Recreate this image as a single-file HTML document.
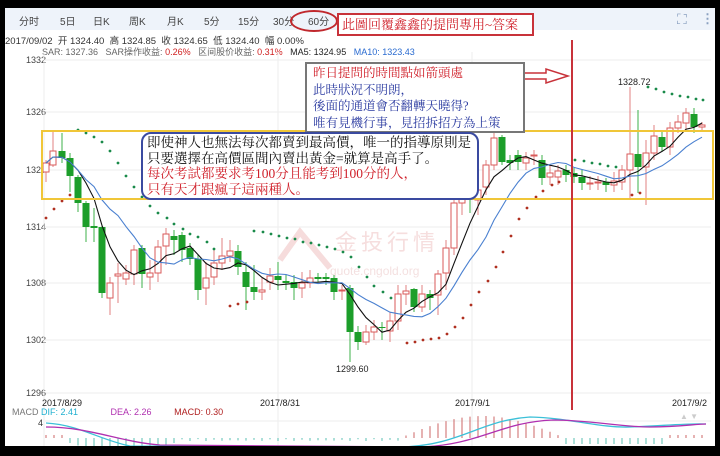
<!DOCTYPE html>
<html><head><meta charset="utf-8">
<style>
body{margin:0;width:720px;height:456px;background:#000;overflow:hidden;font-family:"Liberation Sans","Noto Sans CJK SC",sans-serif;}
#page{position:absolute;left:5px;top:8px;width:710px;height:438px;background:#fff;overflow:hidden;}
.tb{position:absolute;left:0;top:0;width:710px;height:22px;background:#eef3fa;}
.tab{position:absolute;top:5px;font-size:10px;color:#444;}
.abs{position:absolute;white-space:nowrap;}
.serif{font-family:"Liberation Serif","Noto Serif CJK SC",serif;}
</style></head><body>
<div id="page">
<div class="tb"></div>
<span class="tab" style="left:14px">分时</span>
<span class="tab" style="left:55px">5日</span>
<span class="tab" style="left:88px">日K</span>
<span class="tab" style="left:124px">周K</span>
<span class="tab" style="left:162px">月K</span>
<span class="tab" style="left:199px">5分</span>
<span class="tab" style="left:233px">15分</span>
<span class="tab" style="left:268px">30分</span>
<span class="tab" style="left:303px">60分</span>
<div class="abs" style="left:285px;top:2px;width:44px;height:18px;border:2px solid #c0282d;border-radius:50%;"></div>
<div class="abs" style="left:332px;top:5px;width:190px;height:19px;border:2px solid #c8323a;background:#fff;color:#d0202a;font-size:13px;line-height:19px;padding-left:3px;box-sizing:content-box" class="serif"><span class="serif">此圖回覆鑫鑫的提問專用~答案</span></div>
<div class="abs" style="left:672px;top:3px;font-size:14px;color:#8aa0c0">⛶</div>
<div class="abs" style="left:696px;top:3px;font-size:13px;color:#8aa0c0;font-weight:bold">⋮</div>
<div class="abs" style="left:0;top:25px;font-size:9.5px;color:#333">2017/09/02 &nbsp;开 1324.40 &nbsp;高 1324.85 &nbsp;收 1324.65 &nbsp;低 1324.40 &nbsp;幅 0.00%</div>
<div class="abs" style="left:37px;top:37px;font-size:9px;color:#666">SAR: 1327.36 &nbsp; SAR操作收益: <span style="color:#d02020">0.26%</span> &nbsp; 区间股价收益: <span style="color:#d02020">0.31%</span> &nbsp; <span style="color:#222">MA5: 1324.95</span> &nbsp; <span style="color:#2a6bd0">MA10: 1323.43</span></div>
<svg id="ch" width="710" height="438" style="position:absolute;left:0;top:0"></svg>
<div class="abs" style="left:300px;top:54px;width:210px;height:66px;border:2px solid #777;background:#fff;font-size:12.5px;line-height:16.5px;padding:1px 0 0 6px" ><div class="serif" style="color:#d0202a">昨日提問的時間點如箭頭處</div><div class="serif" style="color:#2a3aa0">此時狀況不明朗，</div><div class="serif" style="color:#2a3aa0">後面的通道會否翻轉天曉得?</div><div class="serif" style="color:#2a3aa0">唯有見機行事，見招拆招方為上策</div></div>
<div class="abs" style="left:136px;top:124px;width:330px;height:63px;border:2px solid #3a4aa0;border-radius:10px;background:#fff;font-size:13.5px;line-height:15.5px;padding:1px 0 0 4px"><div class="serif" style="color:#111">即使神人也無法每次都賣到最高價，唯一的指導原則是</div><div class="serif" style="color:#111">只要選擇在高價區間內賣出黃金=就算是高手了。</div><div class="serif" style="color:#d0202a">每次考試都要求考100分且能考到100分的人，</div><div class="serif" style="color:#d0202a">只有天才跟瘋子這兩種人。</div></div>
<div class="abs" style="left:7px;top:399px;font-size:9px;color:#777">MACD <span style="color:#20b0d0">DIF: 2.41</span> &nbsp; &nbsp; &nbsp; &nbsp; &nbsp; &nbsp; <span style="color:#b030b0">DEA: 2.26</span> &nbsp; &nbsp; &nbsp; &nbsp; <span style="color:#b02020">MACD: 0.30</span></div>
</div>
<script>
var s='',C=[
[46,163,172,160,182,'r'],[53,151,165,132,167,'r'],[62,151,158,133,163,'g'],[70,158,176,153,192,'g'],[78,177,203,175,212,'g'],[86,203,227,201,242,'g'],[94,226,228,208,242,'g'],[102,227,293,225,298,'g'],[110,283,298,277,315,'r'],[118,274,276,263,303,'r'],[126,273,279,265,285,'r'],[134,250,274,245,285,'r'],[142,248,274,245,288,'g'],[150,273,277,260,290,'r'],[158,247,273,240,282,'r'],[166,234,246,228,265,'r'],[174,236,240,230,255,'g'],[182,235,250,232,262,'g'],[190,248,259,243,265,'g'],[198,259,290,255,300,'g'],[206,278,288,262,305,'r'],[214,263,277,250,285,'r'],[222,256,263,238,270,'r'],[230,251,256,240,262,'r'],[238,251,267,245,275,'g'],[246,272,287,262,310,'g'],[254,287,292,265,300,'g'],[262,290,292,278,300,'r'],[270,276,282,268,290,'r'],[278,276,280,262,290,'g'],[286,281,283,275,290,'g'],[294,282,288,275,300,'g'],[302,283,288,272,298,'r'],[310,278,283,270,288,'r'],[318,277,279,273,282,'g'],[326,277,279,273,285,'g'],[334,278,292,275,300,'g'],[342,290,291,285,300,'r'],[350,288,332,285,362,'g'],[358,332,342,326,350,'g'],[366,332,342,325,345,'r'],[374,327,332,320,340,'r'],[382,327,328,322,340,'g'],[390,321,331,312,342,'r'],[398,294,321,285,330,'r'],[406,291,294,285,305,'r'],[414,289,307,288,312,'g'],[422,294,307,285,312,'r'],[430,294,298,290,310,'g'],[438,274,295,270,315,'r'],[446,248,273,240,290,'r'],[454,203,248,195,255,'r'],[462,193,203,187,215,'r'],[470,193,198,185,213,'g'],[478,190,200,185,215,'r'],[486,165,187,160,195,'r'],[494,138,165,133,170,'r'],[502,137,162,135,165,'g'],[510,160,163,155,170,'g'],[518,155,162,150,170,'g'],[526,158,163,152,170,'r'],[534,155,156,150,165,'r'],[542,160,178,155,185,'g'],[550,173,177,165,185,'r'],[558,171,177,165,185,'r'],[566,170,175,165,182,'g'],[574,173,177,168,183,'g'],[582,177,183,170,190,'g'],[590,183,184,176,190,'r'],[598,182,183,176,190,'r'],[606,182,185,178,192,'g'],[614,181,185,172,192,'r'],[622,170,182,165,190,'r'],[630,154,170,87,200,'r'],[638,154,167,110,193,'g'],[646,153,167,140,205,'r'],[654,136,153,125,160,'r'],[662,137,147,130,152,'g'],[670,128,147,122,155,'r'],[678,122,128,115,133,'r'],[686,113,123,108,130,'r'],[694,114,127,108,133,'g'],[702,125,127,122,130,'r']];
var oy=8,ox=5;function X(x){return x-ox}function Y(y){return y-oy}
// grid
[60,112,170,227,283,340,393].forEach(function(y,i){s+='<line x1="40" x2="706" y1="'+Y(y)+'" y2="'+Y(y)+'" stroke="#eee"/>';s+='<text x="'+X(26)+'" y="'+(Y(y)+3)+'" font-size="9" fill="#444" font-family="Liberation Sans">'+(1332-6*i)+'</text>';});
[278,472].forEach(function(x){s+='<line x1="'+X(x)+'" x2="'+X(x)+'" y1="'+Y(52)+'" y2="'+Y(446)+'" stroke="#eee"/>'});
s+='<line x1="'+X(44)+'" x2="'+X(44)+'" y1="'+Y(52)+'" y2="'+Y(446)+'" stroke="#eee"/>';
// watermark
s+='<text x="'+X(335)+'" y="'+Y(250)+'" font-size="22" fill="#f6dede" font-family="Noto Sans CJK SC" letter-spacing="4">金投行情</text>';
s+='<text x="'+X(330)+'" y="'+Y(275)+'" font-size="12" fill="#f4e0e0" font-family="Liberation Sans">quote.cngold.org</text>';
s+='<path d="M'+X(280)+' '+Y(260)+' L'+X(300)+' '+Y(232)+' L'+X(330)+' '+Y(268)+'" fill="none" stroke="#f6dcdc" stroke-width="6"/>';
// candles
var cl=[];
C.forEach(function(c){var col=c[5]=='r'?'#d85a5a':'#1c9e2a';var x=X(c[0]);
s+='<line x1="'+x+'" x2="'+x+'" y1="'+Y(c[3])+'" y2="'+Y(c[4])+'" stroke="'+(c[5]=='r'?'#e08080':'#3cb04a')+'"/>';
var h=Math.max(1,c[2]-c[1]);
if(c[5]=='r')s+='<rect x="'+(x-3)+'" y="'+Y(c[1])+'" width="6" height="'+h+'" fill="#fff" stroke="'+col+'"/>';
else s+='<rect x="'+(x-3.5)+'" y="'+Y(c[1])+'" width="7" height="'+h+'" fill="'+col+'"/>';
cl.push(c[5]=='r'?c[1]:c[2]);});
function ma(n,col){var p='';for(var i=0;i<cl.length;i++){var a=0,k=0;for(var j=Math.max(0,i-n+1);j<=i;j++){a+=cl[j];k++;}p+=(i?'L':'M')+X(C[i][0])+' '+Y(a/k)+' ';}s+='<path d="'+p+'" fill="none" stroke="'+col+'" stroke-width="1.1"/>';}
ma(5,'#111');ma(10,'#4a80d0');
// SAR
var G=[[78,130],[86,133],[94,137],[102,142],[110,151],[118,163],[126,176],[134,187],[142,197],[150,206],[158,213],[167,218],[174,224],[183,229],[190,234],[198,237],[207,242],[214,249],[254,231],[263,232],[271,234],[279,236],[287,238],[295,239],[303,242],[311,243],[319,245],[327,247],[335,249],[343,252],[351,257],[359,267],[367,277],[374,286],[383,292],[391,298],[575,160],[584,161],[592,163],[600,164],[608,166],[616,167],[648,87],[656,89],[664,92],[672,94],[680,96],[688,97],[696,99],[703,100]];
var R=[[46,218],[54,209],[62,201],[70,195],[230,306],[238,304],[247,302],[407,343],[415,342],[423,340],[431,339],[439,338],[447,334],[455,327],[463,318],[471,305],[479,292],[488,281],[496,267],[503,252],[511,236],[519,219],[527,208],[536,197],[543,191],[552,185],[559,182],[632,195],[640,193]];
G.forEach(function(p){s+='<circle cx="'+X(p[0])+'" cy="'+Y(p[1])+'" r="1.4" fill="#1a8a4a"/>'});
R.forEach(function(p){s+='<circle cx="'+X(p[0])+'" cy="'+Y(p[1])+'" r="1.4" fill="#b03020"/>'});
s+='<text x="'+X(618)+'" y="'+Y(85)+'" font-size="9" fill="#222">1328.72</text>';
s+='<text x="'+X(336)+'" y="'+Y(372)+'" font-size="9" fill="#222">1299.60</text>';
// yellow box
s+='<rect x="'+X(42)+'" y="'+Y(131)+'" width="671" height="68" fill="none" stroke="#f0c638" stroke-width="2"/>';
// red vline, arrow
s+='<line x1="'+X(572)+'" x2="'+X(572)+'" y1="'+Y(40)+'" y2="'+Y(410)+'" stroke="#c8323a" stroke-width="2"/>';
s+='<path d="M'+X(519)+' '+Y(73)+' L'+X(546)+' '+Y(73)+' L'+X(546)+' '+Y(69)+' L'+X(568)+' '+Y(76)+' L'+X(546)+' '+Y(83)+' L'+X(546)+' '+Y(79)+' L'+X(519)+' '+Y(79)+' Z" fill="#fff" stroke="#c8323a" stroke-width="1.5"/>';
// dates
[['2017/8/29',42],['2017/8/31',260],['2017/9/1',455],['2017/9/2',672]].forEach(function(d){s+='<text x="'+X(d[1])+'" y="'+Y(406)+'" font-size="9" fill="#222">'+d[0]+'</text>'});
s+='<text x="'+X(680)+'" y="'+Y(419)+'" font-size="8" fill="#ccc">▲ ▼</text>';
// MACD
s+='<text x="'+X(38)+'" y="'+Y(426)+'" font-size="9" fill="#333">4</text>';
s+='<line x1="40" x2="706" y1="'+Y(421)+'" y2="'+Y(421)+'" stroke="#eee"/>';
for(var x=46;x<=708;x+=8){var v=0;
if(x<64)v=-3;else if(x<180)v=3+12*Math.sin((x-64)/116*Math.PI);else if(x<400)v=Math.abs(Math.sin(x))*2+1;else if(x<565)v=-22*Math.sin((x-400)/165*Math.PI);else if(x<670)v=6;else v=-3;
var col=v<0?'#c04040':'#30b0a0';s+='<line x1="'+X(x)+'" x2="'+X(x)+'" y1="'+Y(438)+'" y2="'+Y(438+v)+'" stroke="'+col+'" stroke-width="0.8"/>';}
s+='<path d="M'+X(46)+' '+Y(423)+' C'+X(80)+' '+Y(425)+' '+X(100)+' '+Y(440)+' '+X(130)+' '+Y(446)+' L'+X(400)+' '+Y(447)+' C'+X(460)+' '+Y(446)+' '+X(480)+' '+Y(420)+' '+X(530)+' '+Y(417)+' C'+X(570)+' '+Y(418)+' '+X(600)+' '+Y(428)+' '+X(630)+' '+Y(427)+' C'+X(660)+' '+Y(426)+' '+X(690)+' '+Y(423)+' '+X(706)+' '+Y(424)+'" fill="none" stroke="#3cc0d8" stroke-width="1.3"/>';
s+='<path d="M'+X(46)+' '+Y(427)+' C'+X(90)+' '+Y(427)+' '+X(120)+' '+Y(442)+' '+X(160)+' '+Y(445)+' L'+X(420)+' '+Y(447)+' C'+X(480)+' '+Y(445)+' '+X(500)+' '+Y(422)+' '+X(553)+' '+Y(420)+' C'+X(590)+' '+Y(420)+' '+X(620)+' '+Y(427)+' '+X(650)+' '+Y(427)+' C'+X(680)+' '+Y(427)+' '+X(695)+' '+Y(424)+' '+X(706)+' '+Y(424)+'" fill="none" stroke="#b030b0" stroke-width="1.3"/>';
document.getElementById('ch').innerHTML=s;
</script>
</body></html>
